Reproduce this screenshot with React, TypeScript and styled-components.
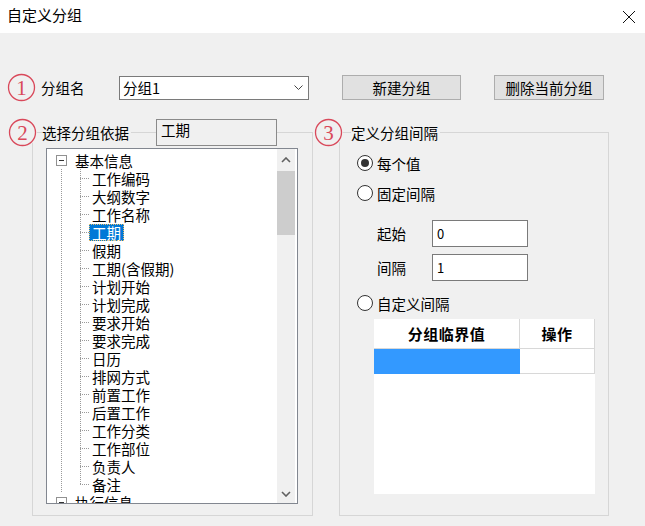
import React from "react";
import styled, { createGlobalStyle } from "styled-components";

const RED = "#d9485a";

const fields = [
	"工作编码",
	"大纲数字",
	"工作名称",
	"工期",
	"假期",
	"工期(含假期)",
	"计划开始",
	"计划完成",
	"要求开始",
	"要求完成",
	"日历",
	"排网方式",
	"前置工作",
	"后置工作",
	"工作分类",
	"工作部位",
	"负责人",
	"备注",
];

function Badge({ n }: { n: number }) {
	return (
		<BadgeWrap>
			<svg width="29" height="29" viewBox="0 0 29 29">
				<circle cx="14.5" cy="14.5" r="13" fill="none" stroke={RED} strokeWidth="1.3" />
				<text
					x="14.5"
					y="21.5"
					textAnchor="middle"
					fontFamily="'Liberation Serif', serif"
					fontSize="21"
					fill={RED}
				>
					{n}
				</text>
			</svg>
		</BadgeWrap>
	);
}

function Chevron({ up }: { up?: boolean }) {
	return (
		<svg width="10" height="6" viewBox="0 0 10 6">
			<polyline
				points={up ? "1,5 5,1 9,5" : "1,1 5,5 9,1"}
				fill="none"
				stroke="#606060"
				strokeWidth="1.6"
			/>
		</svg>
	);
}

function Radio({ label, checked }: { label: string; checked?: boolean }) {
	return (
		<RadioRow>
			<RadioCircle $checked={checked} />
			<span>{label}</span>
		</RadioRow>
	);
}

function App() {
	return (
		<>
			<GlobalStyle />
			<Dialog>
				<TitleBar>
					<Title>自定义分组</Title>
					<svg width="14" height="14" viewBox="0 0 14 14">
						<path d="M1 1 L13 13 M13 1 L1 13" stroke="#111" strokeWidth="1" />
					</svg>
				</TitleBar>
				<Body>
					<TopRow>
						<Badge n={1} />
						<RowLabel>分组名</RowLabel>
						<Combo>
							<span>分组1</span>
							<svg width="9" height="5" viewBox="0 0 9 5">
								<polyline points="0.5,0.5 4.5,4.5 8.5,0.5" fill="none" stroke="#444" strokeWidth="1" />
							</svg>
						</Combo>
						<Button $width={119}>新建分组</Button>
						<Button $width={110}>删除当前分组</Button>
					</TopRow>
					<GroupsRow>
						<Group $width={281} $pad="15px 0 0 13px">
							<Legend $left={-25}>
								<Badge n={2} />
								<LegendText $gap={5}>选择分组依据</LegendText>
								<ReadOnlyBox>工期</ReadOnlyBox>
							</Legend>
							<TreeBox>
								<TreeContent>
									<RootRow>
										<Expander>
											<ExpanderBar />
										</Expander>
										<NodeText>基本信息</NodeText>
									</RootRow>
									<Children>
										{fields.map((f, i) => (
											<ChildRow key={f}>
												<Connector $last={i === fields.length - 1} />
												<NodeText $selected={f === "工期"}>{f}</NodeText>
											</ChildRow>
										))}
									</Children>
									<RootRow>
										<Expander>
											<ExpanderBar />
										</Expander>
										<NodeText>执行信息</NodeText>
									</RootRow>
								</TreeContent>
								<ScrollBar>
									<ScrollButton $height={22}>
										<Chevron up />
									</ScrollButton>
									<Thumb />
									<ScrollSpacer />
									<ScrollButton $height={19}>
										<Chevron />
									</ScrollButton>
								</ScrollBar>
							</TreeBox>
						</Group>
						<Group $width={270} $pad="21px 0 0 17px">
							<Legend $left={-26}>
								<Badge n={3} />
								<LegendText $gap={8}>定义分组间隔</LegendText>
							</Legend>
							<Radio label="每个值" checked />
							<Spacer $h={12} />
							<Radio label="固定间隔" />
							<Spacer $h={18} />
							<FieldRow>
								<FieldLabel>起始</FieldLabel>
								<Input>0</Input>
							</FieldRow>
							<Spacer $h={7} />
							<FieldRow>
								<FieldLabel>间隔</FieldLabel>
								<Input>1</Input>
							</FieldRow>
							<Spacer $h={13} />
							<Radio label="自定义间隔" />
							<Table>
								<HeaderCell>分组临界值</HeaderCell>
								<HeaderCell>操作</HeaderCell>
								<Cell $selected />
								<Cell />
							</Table>
						</Group>
					</GroupsRow>
				</Body>
			</Dialog>
		</>
	);
}

export default App;

const GlobalStyle = createGlobalStyle`
	html, body {
		margin: 0;
		padding: 0;
		background: #f0f0f0;
	}
	body {
		font-family: "Noto Sans CJK SC", "Liberation Sans", sans-serif;
		font-size: 14.5px;
		color: #000;
	}
	* {
		box-sizing: border-box;
	}
`;

const Dialog = styled.div`
	width: 645px;
	height: 526px;
	display: flex;
	flex-direction: column;
	background: #f0f0f0;
	overflow: hidden;
`;

const TitleBar = styled.div`
	height: 33px;
	flex-shrink: 0;
	background: #fff;
	display: flex;
	align-items: center;
	justify-content: space-between;
	padding: 0 9px 0 7px;
`;

const Title = styled.div`
	font-size: 15px;
	line-height: 18px;
	margin-top: -3px;
`;

const Body = styled.div`
	flex: 1;
	padding-top: 42px;
`;

const TopRow = styled.div`
	height: 25px;
	display: flex;
	align-items: center;
	padding-left: 7px;
`;

const BadgeWrap = styled.span`
	width: 29px;
	height: 29px;
	display: flex;
	background: #f0f0f0;
	border-radius: 50%;
	flex-shrink: 0;
`;

const RowLabel = styled.span`
	margin-left: 5px;
	width: 78px;
`;

const Combo = styled.div`
	width: 190px;
	height: 24px;
	border: 1px solid #7a7a7a;
	background: #fff;
	display: flex;
	align-items: center;
	justify-content: space-between;
	padding: 0 5px 0 3px;
	line-height: 18px;
`;

const Button = styled.div<{ $width: number }>`
	width: ${(p) => p.$width}px;
	height: 25px;
	margin-left: 33px;
	background: #e1e1e1;
	border: 1px solid #adadad;
	display: flex;
	align-items: center;
	justify-content: center;
`;

const GroupsRow = styled.div`
	display: flex;
	gap: 26px;
	margin-top: 32px;
	padding-left: 32px;
`;

const Group = styled.div<{ $width: number; $pad: string }>`
	position: relative;
	width: ${(p) => p.$width}px;
	height: 384px;
	border: 1px solid #d6d6d6;
	padding: ${(p) => p.$pad};
	display: flex;
	flex-direction: column;
`;

const Legend = styled.div<{ $left: number }>`
	position: absolute;
	top: -15px;
	left: ${(p) => p.$left}px;
	height: 29px;
	display: flex;
	align-items: center;
`;

const LegendText = styled.span<{ $gap: number }>`
	margin-left: ${(p) => p.$gap}px;
	padding-right: 2px;
	background: #f0f0f0;
	line-height: 20px;
`;

const ReadOnlyBox = styled.div`
	margin-left: 25px;
	width: 121px;
	height: 27px;
	border: 1px solid #8a8a8a;
	background: #f0f0f0;
	padding: 1px 4px;
	line-height: 18px;
`;

const TreeBox = styled.div`
	width: 252px;
	height: 356px;
	border: 1px solid #828790;
	background: #fff;
	display: flex;
	overflow: hidden;
`;

const TreeContent = styled.div`
	flex: 1;
	padding-top: 2px;
	overflow: hidden;
`;

const RootRow = styled.div`
	height: 18px;
	display: flex;
	align-items: center;
	padding-left: 9px;
	gap: 5px;
`;

const Expander = styled.span`
	width: 11px;
	height: 11px;
	border: 1px solid #919191;
	background: #fff;
	display: flex;
	align-items: center;
	justify-content: center;
	flex-shrink: 0;
`;

const ExpanderBar = styled.span`
	width: 5px;
	height: 1px;
	background: #333;
`;

const Children = styled.div`
	background: repeating-linear-gradient(to bottom, #9a9a9a 0 1px, transparent 1px 2px) 14px 0 / 1px 100% no-repeat;
`;

const ChildRow = styled.div`
	height: 18px;
	display: flex;
	align-items: center;
	padding-left: 33px;
`;

const Connector = styled.span<{ $last?: boolean }>`
	width: 9px;
	height: 18px;
	flex-shrink: 0;
	background:
		repeating-linear-gradient(to bottom, #9a9a9a 0 1px, transparent 1px 2px) 0 0 / 1px ${(p) => (p.$last ? "10px" : "100%")} no-repeat,
		repeating-linear-gradient(to right, #9a9a9a 0 1px, transparent 1px 2px) 0 9px / 100% 1px no-repeat;
`;

const NodeText = styled.span<{ $selected?: boolean }>`
	padding: 0 3px;
	line-height: 17px;
	white-space: nowrap;
	background: ${(p) => (p.$selected ? "#0078d7" : "transparent")};
	color: ${(p) => (p.$selected ? "#fff" : "#000")};
	outline: ${(p) => (p.$selected ? "1px dotted #e8c070" : "none")};
	outline-offset: -1px;
`;

const ScrollBar = styled.div`
	width: 18px;
	margin-right: 2px;
	background: #f0f0f0;
	display: flex;
	flex-direction: column;
`;

const ScrollButton = styled.div<{ $height: number }>`
	height: ${(p) => p.$height}px;
	display: flex;
	align-items: center;
	justify-content: center;
`;

const Thumb = styled.div`
	height: 64px;
	background: #cdcdcd;
`;

const ScrollSpacer = styled.div`
	flex: 1;
`;

const Spacer = styled.div<{ $h: number }>`
	height: ${(p) => p.$h}px;
	flex-shrink: 0;
`;

const RadioRow = styled.div`
	height: 18px;
	display: flex;
	align-items: center;
	gap: 4px;
`;

const RadioCircle = styled.span<{ $checked?: boolean }>`
	width: 16px;
	height: 16px;
	border-radius: 50%;
	border: 1px solid #333;
	background: #fff;
	display: flex;
	align-items: center;
	justify-content: center;
	flex-shrink: 0;
	&::after {
		content: "";
		width: 8px;
		height: 8px;
		border-radius: 50%;
		background: #333;
		display: ${(p) => (p.$checked ? "block" : "none")};
	}
`;

const FieldRow = styled.div`
	height: 27px;
	display: flex;
	align-items: center;
	padding-left: 20px;
`;

const FieldLabel = styled.span`
	width: 55px;
`;

const Input = styled.div`
	width: 96px;
	height: 27px;
	border: 1px solid #7a7a7a;
	background: #fff;
	padding-left: 4px;
	display: flex;
	align-items: center;
	font-size: 13px;
`;

const Table = styled.div`
	margin: 7px 0 0 17px;
	width: 221px;
	height: 175px;
	background: #fff;
	display: grid;
	grid-template-columns: 146px 75px;
	grid-template-rows: 30px 25px;
	align-content: start;
`;

const HeaderCell = styled.div`
	border-right: 1px solid #d8d8d8;
	border-bottom: 1px solid #d8d8d8;
	display: flex;
	align-items: center;
	justify-content: center;
	font-size: 15px;
	font-weight: 700;
	letter-spacing: 0.5px;
`;

const Cell = styled.div<{ $selected?: boolean }>`
	background: ${(p) => (p.$selected ? "#3399ff" : "#fff")};
	border-right: ${(p) => (p.$selected ? "none" : "1px solid #d8d8d8")};
	border-bottom: ${(p) => (p.$selected ? "none" : "1px solid #d8d8d8")};
`;
